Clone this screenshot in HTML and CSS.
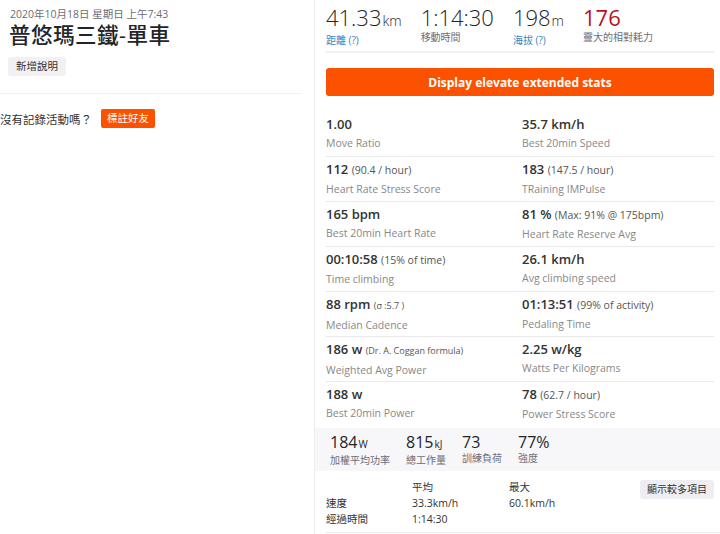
FILE: index.html
```html
<!DOCTYPE html>
<html lang="zh-TW">
<head>
    <meta charset="UTF-8">
    <title>普悠瑪三鐵-單車</title>
    <link rel="stylesheet" href="styles.css">
</head>
<body>
    <div class="page">
        <div class="left">
            <div class="head">
                <div class="date">2020年10月18日 星期日 上午7:43</div>
                <h1 class="title">普悠瑪三鐵-單車</h1>
                <button class="btn-light">新增說明</button>
            </div>
            <div class="tag-row">
                <span>沒有記錄活動嗎？</span>
                <button class="btn-orange">標註好友</button>
            </div>
        </div>

        <div class="right">
            <div class="inner">
                <ul class="big-stats">
                    <li>
                        <div class="big">41.33<span class="unit">km</span></div>
                        <div class="big-label link">距離 (?)</div>
                    </li>
                    <li>
                        <div class="big">1:14:30</div>
                        <div class="big-label">移動時間</div>
                    </li>
                    <li>
                        <div class="big">198<span class="unit">m</span></div>
                        <div class="big-label link">海拔 (?)</div>
                    </li>
                    <li>
                        <div class="big red">176</div>
                        <div class="big-label">靈大的相對耗力</div>
                    </li>
                </ul>

                <button class="btn-elevate">Display elevate extended stats</button>

                <div class="grid">
                    <div class="cell"><div class="val">1.00</div><div class="lbl">Move Ratio</div></div>
                    <div class="cell"><div class="val">35.7 km/h</div><div class="lbl">Best 20min Speed</div></div>

                    <div class="cell"><div class="val">112 <small>(90.4 / hour)</small></div><div class="lbl">Heart Rate Stress Score</div></div>
                    <div class="cell"><div class="val">183 <small>(147.5 / hour)</small></div><div class="lbl">TRaining IMPulse</div></div>

                    <div class="cell"><div class="val">165 bpm</div><div class="lbl">Best 20min Heart Rate</div></div>
                    <div class="cell"><div class="val">81 % <small>(Max: 91% @ 175bpm)</small></div><div class="lbl">Heart Rate Reserve Avg</div></div>

                    <div class="cell"><div class="val">00:10:58 <small>(15% of time)</small></div><div class="lbl">Time climbing</div></div>
                    <div class="cell"><div class="val">26.1 km/h</div><div class="lbl">Avg climbing speed</div></div>

                    <div class="cell"><div class="val">88 rpm <small class="tiny">(σ :5.7 )</small></div><div class="lbl">Median Cadence</div></div>
                    <div class="cell"><div class="val">01:13:51 <small>(99% of activity)</small></div><div class="lbl">Pedaling Time</div></div>

                    <div class="cell"><div class="val">186 w <small class="tiny">(Dr. A. Coggan formula)</small></div><div class="lbl">Weighted Avg Power</div></div>
                    <div class="cell"><div class="val">2.25 w/kg</div><div class="lbl">Watts Per Kilograms</div></div>

                    <div class="cell last"><div class="val">188 w</div><div class="lbl">Best 20min Power</div></div>
                    <div class="cell last"><div class="val">78 <small>(62.7 / hour)</small></div><div class="lbl">Power Stress Score</div></div>
                </div>
            </div>

            <ul class="band">
                <li><div class="band-num">184<span class="unit">W</span></div><div class="band-lbl">加權平均功率</div></li>
                <li><div class="band-num">815<span class="unit">kJ</span></div><div class="band-lbl">總工作量</div></li>
                <li><div class="band-num">73</div><div class="band-lbl">訓練負荷</div></li>
                <li><div class="band-num">77%</div><div class="band-lbl">強度</div></li>
            </ul>

            <div class="inner more">
                <table class="avg-table">
                    <tr><th></th><th>平均</th><th>最大</th></tr>
                    <tr><td>速度</td><td>33.3km/h</td><td>60.1km/h</td></tr>
                    <tr><td>經過時間</td><td>1:14:30</td><td></td></tr>
                </table>
                <button class="btn-light btn-more">顯示較多項目</button>
            </div>
        </div>
    </div>
</body>
</html>
```

FILE: styles.css
```css
body {
    margin: 0;
    background: #fff;
    color: #242428;
    font-family: "Open Sans", "Noto Sans CJK TC", sans-serif;
}
ul {
    list-style: none;
    margin: 0;
    padding: 0;
}
button {
    font-family: inherit;
    border: none;
    cursor: pointer;
}
.page {
    display: flex;
    width: 720px;
    height: 534px;
    overflow: hidden;
}
.left {
    width: 302px;
    flex-shrink: 0;
}
.head {
    padding: 7px 0 17px 10px;
    border-bottom: 1px solid #f0f0f0;
}
.date {
    font-size: 10.5px;
    color: #6d6d78;
    line-height: 14px;
}
.title {
    margin: 0 0 0 -1px;
    font-size: 21.5px;
    font-weight: 500;
    line-height: 28px;
    letter-spacing: 0.5px;
}
.btn-light {
    background: #f0f0f5;
    color: #333;
    font-size: 10.5px;
    border-radius: 3px;
    padding: 0 8px;
    height: 19px;
    line-height: 19px;
}
.head .btn-light {
    margin: 8px 0 0 -2px;
}
.tag-row {
    display: flex;
    align-items: center;
    gap: 9px;
    padding-top: 15px;
    font-size: 11.5px;
    color: #333;
}
.btn-orange {
    background: #fc5200;
    color: #fff;
    font-size: 10.5px;
    border-radius: 2px;
    padding: 0 6px;
    height: 19px;
    line-height: 19px;
}
.right {
    flex: 1;
    margin-left: 12px;
    border-left: 1px solid #eeeeee;
}
.inner {
    padding: 0 6px 0 11px;
}
.big-stats {
    display: flex;
    gap: 19px;
    padding: 4px 0 5px;
    border-bottom: 2px solid #f0f0f5;
}
.big {
    font-size: 22px;
    font-weight: 300;
    line-height: 27px;
    color: #242428;
}
.big .unit {
    font-size: 14px;
    margin-left: 1px;
}
.big.red {
    color: #b9121b;
    font-weight: 400;
}
.big-label {
    font-size: 10px;
    color: #6d6d78;
    line-height: 12px;
}
.big-label.link {
    color: #3d84c2;
}
.btn-elevate {
    display: block;
    width: 100%;
    margin-top: 15px;
    height: 28px;
    background: #fc5200;
    color: #fff;
    font-size: 12px;
    font-weight: 700;
    border-radius: 3px;
}
.grid {
    display: grid;
    grid-template-columns: 196px 1fr;
    margin-top: 16px;
}
.cell {
    height: 45px;
    border-bottom: 1px solid #eaeaea;
    padding-top: 3px;
    box-sizing: border-box;
}
.cell.last {
    border-bottom: none;
}
.val {
    font-size: 13px;
    font-weight: 600;
    line-height: 18px;
    color: #333;
}
.val small {
    font-size: 10.5px;
    font-weight: 400;
    color: #555;
}
.val small.tiny {
    font-size: 9px;
}
.lbl {
    font-size: 10.5px;
    color: #888;
    line-height: 20px;
}
.band {
    display: flex;
    background: #f7f7fa;
    height: 43px;
    padding: 5px 0 0 15px;
    box-sizing: border-box;
    margin-top: 1px;
}
.band li:nth-child(1) { width: 76px; }
.band li:nth-child(2) { width: 56px; }
.band li:nth-child(3) { width: 56px; }
.band-num {
    font-size: 16px;
    font-weight: 400;
    line-height: 19px;
    color: #242428;
}
.band-num .unit {
    font-size: 10px;
    margin-left: 1px;
}
.band-lbl {
    font-size: 10px;
    color: #6d6d78;
    line-height: 12px;
}
.more {
    display: flex;
    justify-content: space-between;
    align-items: flex-start;
    padding-top: 8px;
    height: 53px;
    border-bottom: 1px solid #eaeaea;
    margin-left: 11px;
    padding-left: 0;
}
.avg-table {
    border-collapse: collapse;
    font-size: 10.5px;
    color: #333;
}
.avg-table th {
    font-weight: 400;
    text-align: left;
    padding: 0;
    line-height: 16px;
}
.avg-table td {
    padding: 0;
    line-height: 16px;
}
.avg-table td:first-child,
.avg-table th:first-child { width: 86px; }
.avg-table td:nth-child(2),
.avg-table th:nth-child(2) { width: 97px; }
.btn-more {
    margin-top: 1px;
    padding: 0 7px;
    font-size: 10px;
    background: #eeeef2;
}
```
